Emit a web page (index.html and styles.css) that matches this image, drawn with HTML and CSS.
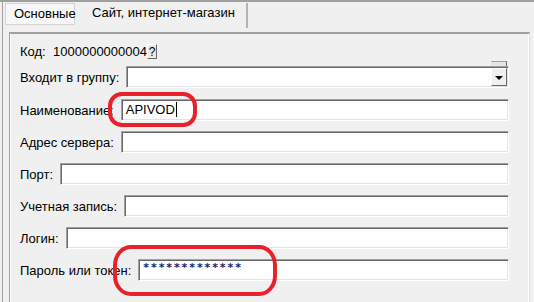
FILE: index.html
```html
<!doctype html>
<html>
  <head>
    <title>Настройки подключения</title>
    <link rel="stylesheet" href="styles.css">
  </head>
  <body>
    <div class="window">
      <div class="tabs">
        <div class="tab active">Основные</div>
        <div class="tab">Сайт, интернет-магазин</div>
      </div>

      <div class="panel">
        <div class="code-row">
          <span class="code-label">Код:</span>
          <span class="code-value">1000000000004</span>
          <span class="help-btn">?</span>
        </div>

        <div class="row row-group">
          <label>Входит в группу:</label>
          <div class="field combo">
            <span class="combo-tab"></span>
            <span class="drop-btn"><span class="arrow"></span></span>
          </div>
        </div>

        <div class="row">
          <label>Наименование:</label>
          <div class="field">APIVOD<span class="caret"></span></div>
        </div>

        <div class="row">
          <label>Адрес сервера:</label>
          <div class="field"></div>
        </div>

        <div class="row">
          <label>Порт:</label>
          <div class="field"></div>
        </div>

        <div class="row">
          <label>Учетная запись:</label>
          <div class="field"></div>
        </div>

        <div class="row">
          <label>Логин:</label>
          <div class="field"></div>
        </div>

        <div class="row">
          <label>Пароль или токен:</label>
          <div class="field password">*************</div>
        </div>
      </div>

      <!-- red hand-drawn marks over the form -->
      <svg class="marks" width="534" height="302" viewBox="0 0 534 302">
        <rect x="110" y="94" width="85" height="31" rx="12" ry="12" />
        <rect x="115" y="247" width="160" height="47" rx="16" ry="18" />
      </svg>
    </div>
  </body>
</html>
```

FILE: styles.css
```css
:root {
  --face: #f0f0f0;
  --shadow: #a0a0a0;
  --dark-shadow: #696969;
  --light: #e3e3e3;
  --mark: #e8212b;
}

body {
  margin: 0;
  background-color: var(--face);
  font-family: "Liberation Sans", Arial, sans-serif;
  font-size: 13px;
  color: #000;
  overflow: hidden;
}

.window {
  position: relative;
  width: 534px;
  height: 302px;
  box-sizing: border-box;
  border-top: 2px solid var(--shadow);
  padding-left: 2px;
}

.window::before {
  content: "";
  position: absolute;
  left: 2px;
  top: 0;
  bottom: 0;
  width: 1px;
  background-color: var(--shadow);
}

.tabs {
  display: flex;
  align-items: flex-start;
  height: 29px;
  padding: 1px 0 0 3px;
  box-sizing: border-box;
}

.tab {
  height: 22px;
  line-height: 20px;
  padding: 0 8px;
  box-sizing: border-box;
}

.tab.active {
  width: 70px;
  border: 1px solid #d4d4d4;
  background-color: #f7f7f7;
}

.tab + .tab {
  height: 25px;
  padding: 0 11px 0 17px;
  border-right: 2px solid #b4b4b4;
}

.panel {
  margin: 1px 4px 0 7px;
  padding: 9px 20px 0 10px;
  height: 280px;
  box-sizing: border-box;
  border-top: 2px solid var(--shadow);
  border-left: 1px solid var(--shadow);
  border-right: 1px solid var(--light);
  box-shadow: inset 1px 0 #fff, -1px 0 #fff inset;
  display: flex;
  flex-direction: column;
  gap: 10px;
}

.code-row {
  display: flex;
  align-items: center;
  height: 16px;
  margin-bottom: -3px;
}

.code-label {
  width: 33px;
}

.help-btn {
  width: 10px;
  height: 15px;
  line-height: 15px;
  text-align: center;
  box-sizing: border-box;
  border: 1px solid;
  border-color: #fff var(--dark-shadow) var(--dark-shadow) #fff;
  background-color: #e8e8e8;
  font-size: 12px;
}

.row {
  display: flex;
  align-items: center;
  gap: 7px;
}

.row-group {
  margin-bottom: 1px;
}

label {
  white-space: nowrap;
}

.field {
  position: relative;
  flex: 1;
  height: 22px;
  line-height: 20px;
  padding: 0 4px;
  box-sizing: border-box;
  background-color: #fff;
  border: 1px solid;
  border-color: var(--shadow) #fff #fff var(--shadow);
  box-shadow:
    inset 1px 1px var(--dark-shadow),
    inset -1px -1px var(--light);
}

.caret {
  display: inline-block;
  width: 1px;
  height: 15px;
  margin-left: 1px;
  vertical-align: -3px;
  background-color: #000;
}

.password {
  color: #13236b;
  font-family: "DejaVu Sans", sans-serif;
  font-size: 11px;
  font-weight: bold;
  letter-spacing: 1.9px;
  line-height: 16px;
}

.combo-tab {
  position: absolute;
  right: 1px;
  top: -6px;
  width: 14px;
  height: 4px;
  border: 1px solid;
  border-color: var(--shadow) var(--dark-shadow) transparent var(--light);
  border-bottom: none;
  background-color: #e6e6e6;
}

.drop-btn {
  position: absolute;
  right: 1px;
  top: 1px;
  bottom: 1px;
  width: 16px;
  box-sizing: border-box;
  border: 1px solid;
  border-color: #fff var(--dark-shadow) var(--dark-shadow) #fff;
  background-color: var(--face);
  display: flex;
  align-items: center;
  justify-content: center;
}

.arrow {
  width: 0;
  height: 0;
  border-left: 4px solid transparent;
  border-right: 4px solid transparent;
  border-top: 4px solid #000;
  margin-top: 1px;
}

.marks {
  position: absolute;
  left: 0;
  top: -2px;
  pointer-events: none;
}

.marks rect {
  fill: none;
  stroke: var(--mark);
  stroke-width: 4;
}
```
